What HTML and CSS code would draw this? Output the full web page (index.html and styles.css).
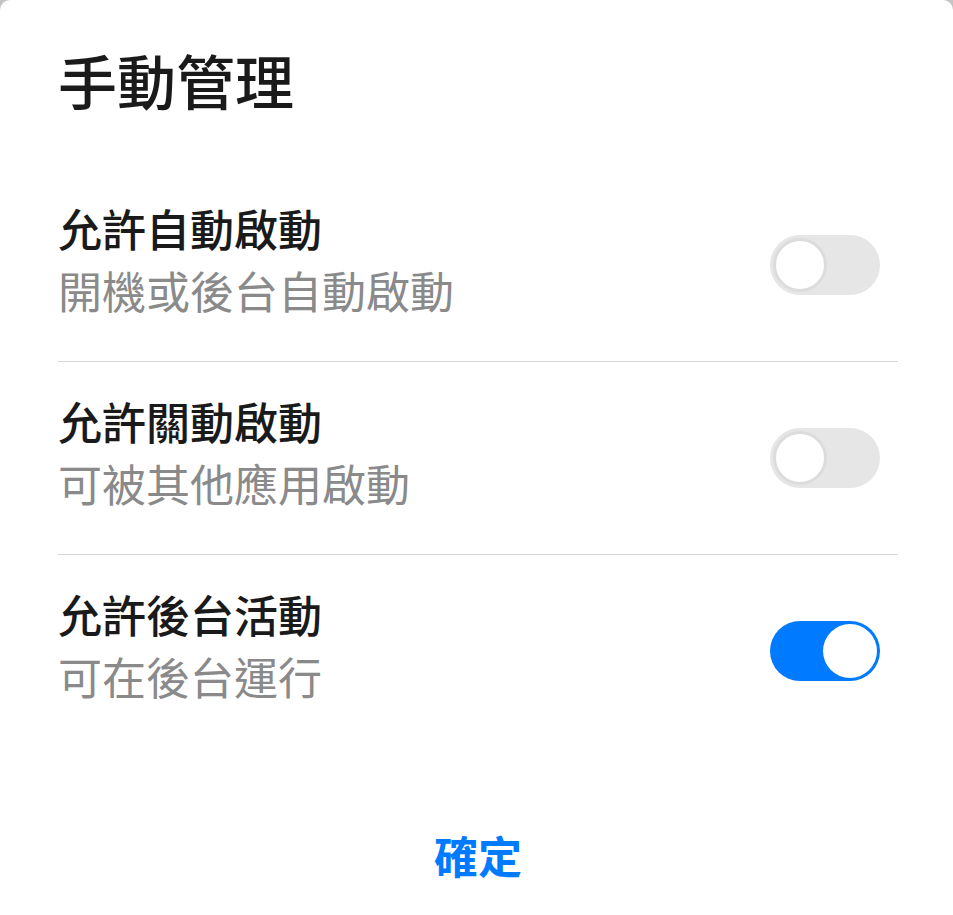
FILE: index.html
```html
<!DOCTYPE html>
<html lang="zh-Hant">
<head>
    <meta charset="UTF-8">
    <meta name="viewport" content="width=device-width, initial-scale=1.0">
    <title>手動管理</title>
    <link rel="stylesheet" href="styles.css">
</head>
<body>
    <div class="dialog">
        <h2 class="dialog-title">手動管理</h2>
        <div class="option-list">
            <div class="option">
                <div class="option-text">
                    <div class="option-name">允許自動啟動</div>
                    <div class="option-desc">開機或後台自動啟動</div>
                </div>
                <span class="switch"><span class="knob"></span></span>
            </div>
            <div class="option">
                <div class="option-text">
                    <div class="option-name">允許關動啟動</div>
                    <div class="option-desc">可被其他應用啟動</div>
                </div>
                <span class="switch"><span class="knob"></span></span>
            </div>
            <div class="option">
                <div class="option-text">
                    <div class="option-name">允許後台活動</div>
                    <div class="option-desc">可在後台運行</div>
                </div>
                <span class="switch on"><span class="knob"></span></span>
            </div>
        </div>
        <div class="dialog-actions">
            <button class="confirm-button">確定</button>
        </div>
    </div>
</body>
</html>
```

FILE: styles.css
```css
body {
    margin: 0;
    background-color: #c4c4c4;
    font-family: "Noto Sans CJK TC", "Noto Sans", sans-serif;
}
.dialog {
    background: white;
    min-height: 915px;
    box-sizing: border-box;
    border-radius: 10px 10px 0 0;
    padding: 0 55px 0 58px;
}
.dialog-title {
    margin: 0;
    padding-top: 45px;
    height: 169px;
    box-sizing: border-box;
    font-size: 59px;
    line-height: 70px;
    font-weight: 500;
    color: #1a1a1a;
}
.option {
    display: flex;
    align-items: center;
    justify-content: space-between;
    height: 192px;
    padding-right: 18px;
    border-bottom: 1px solid #d6d6d6;
}
.option:last-child {
    border-bottom: none;
}
.option-text {
    margin-top: -12px;
}
.option-name {
    font-size: 44px;
    line-height: 62px;
    font-weight: 500;
    color: #1a1a1a;
}
.option-desc {
    font-size: 44px;
    line-height: 62px;
    color: #8a8a8a;
}
.switch {
    width: 110px;
    height: 60px;
    border-radius: 30px;
    background-color: #e6e6e6;
    box-sizing: border-box;
    padding: 3px;
    display: flex;
}
.knob {
    width: 54px;
    height: 54px;
    border-radius: 50%;
    background: white;
    box-sizing: border-box;
    border: 3px solid #dcdcdc;
}
.switch.on {
    background-color: #007aff;
    justify-content: flex-end;
}
.switch.on .knob {
    border: none;
}
.dialog-actions {
    display: flex;
    justify-content: center;
    padding-top: 78px;
}
.confirm-button {
    background: none;
    border: none;
    padding: 0;
    font-family: inherit;
    font-size: 44px;
    line-height: 60px;
    font-weight: 700;
    color: #007aff;
    cursor: pointer;
}
```
